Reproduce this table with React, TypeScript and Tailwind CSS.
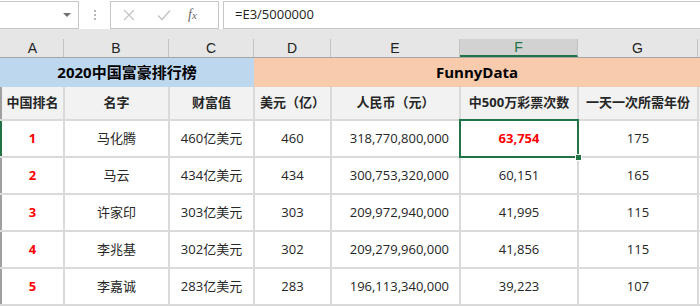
/* ── 数据 ─────────────────────────────────────────────── */

type Row = {
  rank: number;
  name: string;
  wealth: string;
  usd: string;
  cny: string;
  times: string;
  years: string;
};

const rows: Row[] = [
  { rank: 1, name: "马化腾", wealth: "460亿美元", usd: "460", cny: "318,770,800,000", times: "63,754", years: "175" },
  { rank: 2, name: "马云", wealth: "434亿美元", usd: "434", cny: "300,753,320,000", times: "60,151", years: "165" },
  { rank: 3, name: "许家印", wealth: "303亿美元", usd: "303", cny: "209,972,940,000", times: "41,995", years: "115" },
  { rank: 4, name: "李兆基", wealth: "302亿美元", usd: "302", cny: "209,279,960,000", times: "41,856", years: "115" },
  { rank: 5, name: "李嘉诚", wealth: "283亿美元", usd: "283", cny: "196,113,340,000", times: "39,223", years: "107" },
];

const letters = ["A", "B", "C", "D", "E", "F", "G"];
// 每列宽度（含右侧 2px 网格线）
const widths = ["w-[63px]", "w-[105px]", "w-[85px]", "w-[77px]", "w-[129px]", "w-[118px]", "w-[120px]"];
const headWidths = ["w-[62px]", "w-[105px]", "w-[85px]", "w-[77px]", "w-[129px]", "w-[118px]", "w-[120px]"];

const headers = ["中国排名", "名字", "财富值", "美元（亿）", "人民币（元）", "中500万彩票次数", "一天一次所需年份"];

const font = "font-['Open_Sans','Noto_Sans_CJK_SC',sans-serif]";

/* ── 编辑栏 ────────────────────────────────────────────── */

function FormulaBar() {
  return (
    <div className="flex h-[29px] items-start bg-white pt-[1px]">
      <div className="flex h-[28px] w-[79px] items-center justify-end border border-l-0 border-[#c6c6c6] pr-[4px]">
        <svg width="10" height="6" viewBox="0 0 10 6" className="mr-[2px]">
          <path d="M1 1h8L5 5z" fill="#707070" />
        </svg>
      </div>
      <div className="flex h-[28px] w-[31px] flex-col items-center justify-center gap-[2px]">
        <span className="h-[2px] w-[2px] bg-[#b8b8b8]" />
        <span className="h-[2px] w-[2px] bg-[#b8b8b8]" />
        <span className="h-[2px] w-[2px] bg-[#b8b8b8]" />
      </div>
      <div className="flex h-[28px] w-[109px] items-center border border-[#c6c6c6]">
        <svg width="12" height="12" viewBox="0 0 12 12" className="ml-[12px]">
          <path d="M1 1l10 10M11 1L1 11" stroke="#c4c4c4" strokeWidth="1.3" />
        </svg>
        <svg width="14" height="12" viewBox="0 0 14 12" className="ml-[22px]">
          <path d="M1 6.5l4 4L13 1.5" stroke="#c4c4c4" strokeWidth="1.4" fill="none" />
        </svg>
        <span className="ml-[17px] font-['Liberation_Serif',serif] text-[14px] italic leading-none text-[#6a6a6a]">
          f<span className="text-[11px]">x</span>
        </span>
      </div>
      <div className="ml-[4px] flex h-[28px] flex-1 items-center border border-r-0 border-[#c6c6c6] pl-[11px] text-[13px] text-[#222]">
        =E3/5000000
      </div>
    </div>
  );
}

/* ── 列标 ──────────────────────────────────────────────── */

function ColumnHeads() {
  return (
    <div className="bg-[#e6e6e6] pt-[10px]">
      <div className="flex h-[19px] border-b border-[#a6a6a6]">
        <span className="w-[2px] shrink-0" />
        {letters.map((l, i) => (
          <div
            key={l}
            className={`flex shrink-0 items-center justify-center border-r border-[#c2c2c2] font-['Liberation_Sans',sans-serif] text-[14px] text-[#222] ${headWidths[i]} ${
              l === "F" ? "border-b-2 border-b-[#217346] bg-[#d2d2d2] text-[#217346]" : ""
            }`}
          >
            {l}
          </div>
        ))}
        <div className="flex-1" />
      </div>
    </div>
  );
}

/* ── 表格 ──────────────────────────────────────────────── */

function Cell({ i, className = "", children }: { i: number; className?: string; children?: React.ReactNode }) {
  return (
    <div className={`flex shrink-0 items-center justify-center border-r-2 border-[#dadada] ${widths[i]} ${className}`}>
      {children}
    </div>
  );
}

export default function App() {
  return (
    <div className={`h-[307px] w-[700px] overflow-hidden bg-white ${font}`}>
      <FormulaBar />
      <ColumnHeads />

      {/* 第 1 行：合并标题 */}
      <div className="flex h-[29px] text-[15px] font-bold text-black">
        <div className="flex w-[254px] items-center justify-center bg-[#bdd7ee]">2020中国富豪排行榜</div>
        <div className="flex flex-1 items-center justify-center bg-[#f8cbad]">FunnyData</div>
      </div>

      {/* 第 2 行：表头 */}
      <div className="flex h-[34px] border-b-2 border-[#dadada] bg-[#f2f2f2] text-[13px] font-bold text-[#262626]">
        <span className="w-[2px] shrink-0 bg-[#a0a0a0]" />
        {headers.map((h, i) => (
          <Cell key={h} i={i}>
            {h}
          </Cell>
        ))}
        <div className="flex-1" />
      </div>

      {/* 数据行 */}
      {rows.map((r) => {
        const sel = r.rank === 1;
        return (
          <div key={r.rank} className="flex h-[37px] border-b-2 border-[#dadada] text-[13px] text-[#262626]">
            <span className={`w-[2px] shrink-0 ${sel ? "bg-[#217346]" : "bg-[#a0a0a0]"}`} />
            <Cell i={0} className="font-bold text-[#ff0000]">{r.rank}</Cell>
            <Cell i={1}>{r.name}</Cell>
            <Cell i={2}>{r.wealth}</Cell>
            <Cell i={3}>{r.usd}</Cell>
            <Cell i={4} className="justify-end pr-[10px]">{r.cny}</Cell>
            <Cell i={5} className={`relative ${sel ? "font-bold text-[#ff0000]" : ""}`}>
              {r.times}
              {sel && (
                <>
                  <span className="absolute -top-[2px] -bottom-[2px] -left-[2px] -right-[2px] border-2 border-[#217346]" />
                  <span className="absolute -bottom-[5px] -right-[5px] z-10 h-[7px] w-[7px] border border-white bg-[#217346]" />
                </>
              )}
            </Cell>
            <Cell i={6}>{r.years}</Cell>
            <div className="flex-1" />
          </div>
        );
      })}
    </div>
  );
}
